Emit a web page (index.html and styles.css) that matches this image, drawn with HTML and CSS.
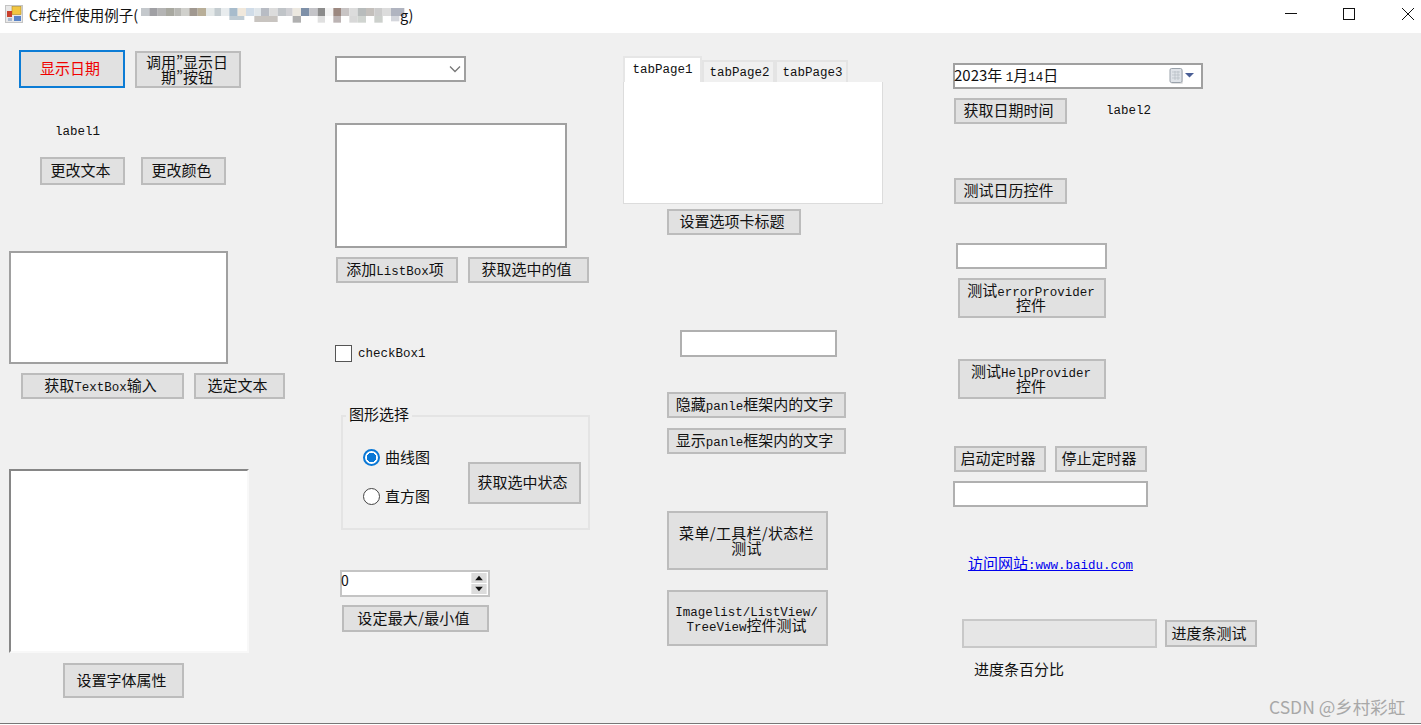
FILE: index.html
```html
<!DOCTYPE html>
<html lang="zh-CN">
<head>
<meta charset="utf-8">
<title>C#控件使用例子</title>
<link rel="stylesheet" href="styles.css">
</head>
<body>
<div class="window">
  <header class="titlebar">
    <svg class="app-icon" width="18" height="18" viewBox="0 0 18 18"><rect x="0.5" y="0.5" width="17" height="17" fill="#e8e8e8" stroke="#c4c4c4"/><rect x="7" y="1.5" width="9" height="8" fill="#f2c641" stroke="#b08a20" stroke-width=".6"/><rect x="2" y="6" width="5" height="6" fill="#c9402c"/><rect x="9" y="11" width="7" height="5" fill="#5a84c8"/><rect x="3" y="13" width="4" height="3" fill="#a9b8d0"/></svg>
    <span class="title-text">C#控件使用例子(</span>
    <span class="title-end">g)</span>
    <svg class="mosaic" width="264" height="33" viewBox="20 0 792 99">
      <g class="row1">
        <rect x="20" y="24" width="25" height="24" fill="#c4c8cc"/><rect x="45" y="24" width="25" height="24" fill="#a0a0a4"/><rect x="70" y="24" width="25" height="24" fill="#b4b4b4"/><rect x="95" y="24" width="25" height="24" fill="#a8a8a0"/><rect x="120" y="24" width="20" height="24" fill="#b8b8b4"/><rect x="140" y="24" width="25" height="24" fill="#d0d0cc"/><rect x="165" y="24" width="25" height="24" fill="#a09890"/><rect x="190" y="24" width="25" height="24" fill="#b8ae98"/><rect x="215" y="24" width="25" height="24" fill="#e4e8e8"/><rect x="240" y="24" width="20" height="24" fill="#c4ccd0"/><rect x="260" y="24" width="25" height="24" fill="#e8ecee"/><rect x="285" y="24" width="25" height="24" fill="#a8bccc"/><rect x="310" y="24" width="25" height="24" fill="#f0e8dc"/><rect x="335" y="24" width="25" height="24" fill="#d0dce8"/><rect x="360" y="24" width="20" height="24" fill="#e0e6ea"/><rect x="380" y="24" width="25" height="24" fill="#b8bcc4"/><rect x="405" y="24" width="25" height="24" fill="#dcdcdc"/><rect x="430" y="24" width="25" height="24" fill="#c0c4c8"/><rect x="455" y="24" width="20" height="24" fill="#d0d0d4"/><rect x="475" y="24" width="25" height="24" fill="#ece8e0"/><rect x="500" y="24" width="25" height="24" fill="#7e90a8"/><rect x="525" y="24" width="25" height="24" fill="#c4c4c8"/><rect x="550" y="24" width="22" height="24" fill="#8c8c8c"/><rect x="572" y="24" width="25" height="24" fill="#f4f4f4"/><rect x="597" y="24" width="23" height="24" fill="#9c8880"/><rect x="620" y="24" width="25" height="24" fill="#c8c4c4"/><rect x="645" y="24" width="25" height="24" fill="#dcdcdc"/><rect x="670" y="24" width="25" height="24" fill="#b8bcbc"/><rect x="695" y="24" width="25" height="24" fill="#c4c0bc"/><rect x="720" y="24" width="25" height="24" fill="#cccccc"/><rect x="745" y="24" width="25" height="24" fill="#dcdcdc"/><rect x="770" y="24" width="40" height="24" fill="#b0b4c0"/>
      </g>
      <g class="row2">
        <rect x="285" y="48" width="45" height="12" fill="#c0ccd4"/><rect x="360" y="48" width="70" height="18" fill="#c8c4c0"/><rect x="475" y="48" width="25" height="20" fill="#b0b0b0"/><rect x="550" y="48" width="22" height="20" fill="#e0e0e0"/><rect x="597" y="48" width="23" height="20" fill="#bcb4b4"/><rect x="645" y="48" width="25" height="20" fill="#d8d8d8"/><rect x="670" y="48" width="25" height="20" fill="#d0d4d0"/><rect x="720" y="48" width="25" height="20" fill="#ccd0cc"/><rect x="770" y="48" width="25" height="16" fill="#d4d6dc"/>
      </g>
    </svg>
    <div class="win-buttons">
      <svg class="win-btn" width="14" height="14" viewBox="0 0 14 14"><path d="M1 6.5h12" stroke="#111" fill="none"/></svg>
      <svg class="win-btn max" width="14" height="14" viewBox="0 0 14 14"><rect x="1.5" y="1.5" width="11" height="11" stroke="#111" fill="none"/></svg>
      <svg class="win-btn" width="14" height="14" viewBox="0 0 14 14"><path d="M1 1l12 12M13 1L1 13" stroke="#111" fill="none"/></svg>
    </div>
  </header>

  <main class="form">
    <button class="btn primary c-show">显示日期</button>
    <button class="btn tight c-call">调用”显示日期”按钮</button>
    <span class="lat c-label1">label1</span>
    <button class="btn c-text">更改文本</button>
    <button class="btn c-color">更改颜色</button>

    <div class="field c-input1"></div>
    <button class="btn c-gettb">获取<span class="lat">TextBox</span>输入</button>
    <button class="btn c-sel">选定文本</button>

    <div class="rich c-rich"></div>
    <button class="btn c-font">设置字体属性</button>

    <div class="field c-combo">
      <svg class="chev" width="12" height="8" viewBox="0 0 12 8"><path d="M1 1.5l5 5 5-5" stroke="#777" stroke-width="1.3" fill="none"/></svg>
    </div>
    <div class="field c-list"></div>
    <button class="btn c-addl">添加<span class="lat">ListBox</span>项</button>
    <button class="btn c-getl">获取选中的值</button>

    <span class="box c-check"></span>
    <span class="lat c-checkl">checkBox1</span>

    <fieldset class="group c-group">
      <legend class="legend">图形选择</legend>
    </fieldset>
    <span class="radio on c-r1"></span><span class="plain c-r1l">曲线图</span>
    <span class="radio c-r2"></span><span class="plain c-r2l">直方图</span>
    <button class="btn c-getst">获取选中状态</button>

    <div class="field soft c-num">
      <span class="num-val">0</span>
      <span class="spin">
        <svg width="16" height="22" viewBox="0 0 16 22"><rect width="16" height="10.5" fill="#dcdcdc"/><rect y="11.5" width="16" height="10.5" fill="#dcdcdc"/><path d="M8 3l4 4.5h-8zM8 19l4-4.5h-8z" fill="#111"/></svg>
      </span>
    </div>
    <button class="btn c-max">设定最大/最小值</button>

    <div class="tabs c-tabs">
      <span class="tab active lat">tabPage1</span>
      <span class="tab lat">tabPage2</span>
      <span class="tab lat">tabPage3</span>
    </div>
    <div class="tab-page c-page"></div>
    <button class="btn c-settab">设置选项卡标题</button>

    <div class="field soft-dark c-input2"></div>
    <button class="btn c-hide">隐藏<span class="lat">panle</span>框架内的文字</button>
    <button class="btn c-showp">显示<span class="lat">panle</span>框架内的文字</button>
    <button class="btn tight c-menu">菜单/工具栏/状态栏测试</button>
    <button class="btn tight c-image"><span class="lat">Imagelist/ListView/ TreeView</span>控件测试</button>

    <div class="field c-date">
      <span class="date-val">2023年 <span class="lat">1</span>月<span class="lat">14</span>日</span>
      <svg class="cal" width="26" height="18" viewBox="0 0 26 18"><rect x="2" y="3" width="12" height="14" rx="1.5" fill="#cfcfcf" opacity=".6"/><rect x="1" y="1.5" width="12" height="14" rx="1.5" fill="#dfe3e8" stroke="#9aa2ab"/><path d="M3 5h8M3 8h8M3 11h8M6 4v9M9 4v9" stroke="#b4bbc3" stroke-width=".7"/><path d="M16 6h9l-4.5 4.5z" fill="#4a5f96"/></svg>
    </div>
    <button class="btn c-getdt">获取日期时间</button>
    <span class="lat c-label2">label2</span>
    <button class="btn c-cal">测试日历控件</button>
    <div class="field c-input3"></div>
    <button class="btn tight c-err">测试<span class="lat">errorProvider</span> 控件</button>
    <button class="btn tight c-help">测试<span class="lat">HelpProvider</span> 控件</button>
    <button class="btn c-start">启动定时器</button>
    <button class="btn c-stop">停止定时器</button>
    <div class="field c-input4"></div>
    <a class="link c-link" href="#">访问网站<span class="lat">:www.baidu.com</span></a>
    <div class="progress c-prog"></div>
    <button class="btn c-ptest">进度条测试</button>
    <span class="plain c-pct">进度条百分比</span>
    <span class="watermark">CSDN @乡村彩虹</span>
  </main>
</div>
</body>
</html>
```

FILE: styles.css
```css
* { box-sizing: border-box; }
html, body { margin: 0; padding: 0; background: #fff; }
body {
  width: 1421px;
  height: 725px;
  overflow: hidden;
  font-family: "Noto Sans CJK SC", "Noto Sans", sans-serif;
  font-size: 15px;
  color: #111;
}
.window { display: flex; flex-direction: column; height: 725px; }
.titlebar {
  height: 33px;
  flex: none;
  display: flex;
  align-items: center;
  background: #fff;
  padding-left: 5px;
  font-size: 14.5px;
}
.app-icon { margin-right: 6px; margin-top: -5px; }
.title-text { margin-top: -5px; white-space: nowrap; width: 112px; }
.mosaic { display: block; }
.title-end { order: 1; margin-top: -5px; margin-left: -5px; }
.win-buttons { order: 2; margin-left: auto; display: flex; gap: 44px; margin-right: 6px; margin-top: -5px; }
.win-btn { display: block; }
.win-btn.max { margin-right: 1px; }

.form {
  position: relative;
  height: 691px;
  flex: none;
  background: #f0f0f0;
}
.form::after {
  content: "";
  position: absolute;
  left: 0; right: 0; top: 690px;
  height: 1px;
  background: #777;
}

.lat { font-family: "Liberation Mono", "DejaVu Sans Mono", monospace; font-size: 12.5px; letter-spacing: 0; }
.btn .lat, .link .lat, .date-val .lat { line-height: 0; }
.form > span, .form > button, .form > div, .form > a, .form > fieldset { position: absolute; }

.btn {
  margin: 0;
  padding: 0 4px 2px 0;
  font-family: inherit;
  font-size: 15px;
  color: #111;
  background: #e1e1e1;
  border: 2px solid #bcbcbc;
  line-height: 18px;
  white-space: normal;
}
.btn.tight { line-height: 15px; }
.primary { border-color: #0c7cd5; color: #f00000; }
.field { background: #fff; border: 2px solid #a0a0a0; }
.soft { border-color: #c4c4c4; }
.soft-dark { border-color: #b0b0b0; }
.rich { background: #fff; border-style: solid; border-width: 2px; border-color: #868686 #f8f8f8 #f8f8f8 #868686; }
.plain { white-space: nowrap; line-height: 20px; }
.link { color: #0000ee; white-space: nowrap; font-size: 15px; line-height: 18px; text-decoration: underline; }

.box { width: 17px; height: 17px; background: #fff; border: 1px solid #555; }
.radio { width: 17px; height: 17px; border-radius: 50%; background: #fff; border: 1px solid #444; }
.radio.on { border: 2px solid #0a78d6; background: radial-gradient(circle, #0a78d6 0 4.5px, #fff 5px); }

.group { margin: 0; padding: 0; border: 2px solid #e4e4e4; }
.legend { padding: 0 3px 4px; margin-left: 3px; font-size: 15px; line-height: 16px; }

.chev { position: absolute; right: 3px; top: 7px; }
.num-val { position: absolute; left: -1px; top: -2px; font-size: 14px; line-height: 20px; }
.spin { position: absolute; right: 1px; top: 1px; height: 21px; display: block; }
.spin svg { display: block; height: 21px; }
.date-val { position: absolute; left: -1px; top: 0; font-size: 15px; line-height: 20px; white-space: nowrap; }
.cal { position: absolute; right: 6px; top: 2px; }

.tabs { display: flex; align-items: flex-end; height: 26px; }
.tab { display: block; width: 73px; height: 22px; background: #f0f0f0; border: 2px solid #e4e4e4; border-bottom: 0; text-align: center; line-height: 22px; padding-left: 2px; }
.tab.active { width: 79px; height: 26px; background: #fff; border-color: #e6e6e6; line-height: 24px; padding-left: 0; }
.tab-page { background: #fff; border: 1px solid #dcdcdc; border-top: 0; }

.progress { background: #e6e6e6; border: 2px solid #c8c8c8; }
.watermark { color: #a8a8a8; font-size: 17.5px; white-space: nowrap; line-height: 20px; }

/* Form designer layout: each control has its own place on the form canvas. */
.c-show { left: 19px; top: 17px; width: 106px; height: 38px; }
.c-call { left: 135px; top: 18px; width: 106px; height: 37px; padding: 0 10px 2px 8px; font-feature-settings: "pwid"; }
.c-label1 { left: 55px; top: 92px; }
.c-text { left: 40px; top: 124px; width: 85px; height: 28px; }
.c-color { left: 141px; top: 124px; width: 85px; height: 28px; }
.c-input1 { left: 9px; top: 218px; width: 219px; height: 113px; }
.c-gettb { left: 21px; top: 340px; width: 163px; height: 26px; }
.c-sel { left: 194px; top: 340px; width: 91px; height: 26px; }
.c-rich { left: 9px; top: 436px; width: 240px; height: 184px; }
.c-font { left: 63px; top: 630px; width: 121px; height: 35px; }
.c-combo { left: 335px; top: 23px; width: 131px; height: 26px; }
.c-list { left: 335px; top: 90px; width: 232px; height: 125px; }
.c-addl { left: 336px; top: 224px; width: 122px; height: 26px; }
.c-getl { left: 468px; top: 224px; width: 121px; height: 26px; }
.c-check { left: 335px; top: 312px; }
.c-checkl { left: 358px; top: 314px; }
.c-group { left: 341px; top: 373px; width: 249px; height: 124px; }
.c-r1 { left: 363px; top: 416px; }
.c-r1l { left: 385px; top: 414px; }
.c-r2 { left: 363px; top: 455px; }
.c-r2l { left: 385px; top: 453px; }
.c-getst { left: 468px; top: 429px; width: 113px; height: 42px; }
.c-num { left: 340px; top: 537px; width: 150px; height: 27px; }
.c-max { left: 342px; top: 572px; width: 147px; height: 27px; letter-spacing: .2px; }
.c-tabs { left: 623px; top: 23px; }
.c-page { left: 623px; top: 49px; width: 260px; height: 122px; }
.c-settab { left: 667px; top: 176px; width: 134px; height: 26px; }
.c-input2 { left: 680px; top: 297px; width: 157px; height: 27px; }
.c-hide { left: 667px; top: 359px; width: 179px; height: 26px; }
.c-showp { left: 667px; top: 395px; width: 179px; height: 26px; }
.c-menu { left: 667px; top: 478px; width: 161px; height: 59px; padding: 0 10px 2px 8px; letter-spacing: .3px; }
.c-image { left: 667px; top: 557px; width: 161px; height: 56px; padding: 0 6px 2px 4px; }
.c-date { left: 953px; top: 30px; width: 250px; height: 26px; }
.c-getdt { left: 954px; top: 65px; width: 113px; height: 26px; }
.c-label2 { left: 1106px; top: 71px; }
.c-cal { left: 954px; top: 145px; width: 113px; height: 26px; }
.c-input3 { left: 956px; top: 210px; width: 151px; height: 26px; border-color: #b0b0b0; }
.c-err { left: 958px; top: 245px; width: 148px; height: 40px; padding: 0 8px 2px 6px; }
.c-help { left: 958px; top: 326px; width: 148px; height: 40px; padding: 0 8px 2px 6px; }
.c-start { left: 954px; top: 413px; width: 92px; height: 26px; }
.c-stop { left: 1055px; top: 413px; width: 92px; height: 26px; }
.c-input4 { left: 953px; top: 448px; width: 195px; height: 26px; border-color: #b0b0b0; }
.c-link { left: 968px; top: 521px; }
.c-prog { left: 962px; top: 586px; width: 195px; height: 29px; }
.c-ptest { left: 1165px; top: 587px; width: 92px; height: 27px; }
.c-pct { left: 974px; top: 626px; }
.watermark { left: 1269px; top: 664px; }
```
